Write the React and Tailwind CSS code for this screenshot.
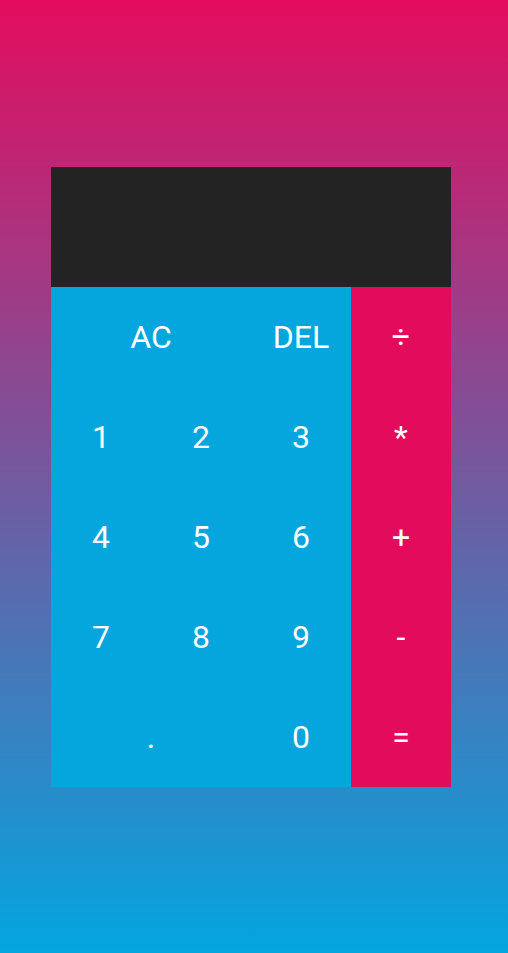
import React from 'react';

const Key = ({ label, span, op }) => (
    <button
        className={`${span ? 'col-span-2' : ''} ${op ? 'bg-[#e30c5c]' : 'bg-[#05a5de]'} h-[100px] flex items-center justify-center text-white text-[32px] leading-none cursor-pointer`}
    >
        {label}
    </button>
);

export default function App() {
    return (
        <div
            className="min-h-[953px] w-full bg-[linear-gradient(to_bottom,#e40c5e,#02a6e0)] pl-[51px] pt-[167px]"
            style={{ fontFamily: 'Roboto, "Noto Sans", sans-serif' }}
        >
            <div className="w-[400px] grid grid-cols-4">
                {/* display */}
                <div className="col-span-4 h-[120px] bg-[#232323] flex flex-col items-end justify-around px-2 text-white break-all">
                    <div className="text-xl opacity-75"></div>
                    <div className="text-4xl"></div>
                </div>

                <Key label="AC" span />
                <Key label="DEL" />
                <Key label="÷" op />
                <Key label="1" />
                <Key label="2" />
                <Key label="3" />
                <Key label="*" op />
                <Key label="4" />
                <Key label="5" />
                <Key label="6" />
                <Key label="+" op />
                <Key label="7" />
                <Key label="8" />
                <Key label="9" />
                <Key label="-" op />
                <Key label="." span />
                <Key label="0" />
                <Key label="=" op />
            </div>
        </div>
    );
}
